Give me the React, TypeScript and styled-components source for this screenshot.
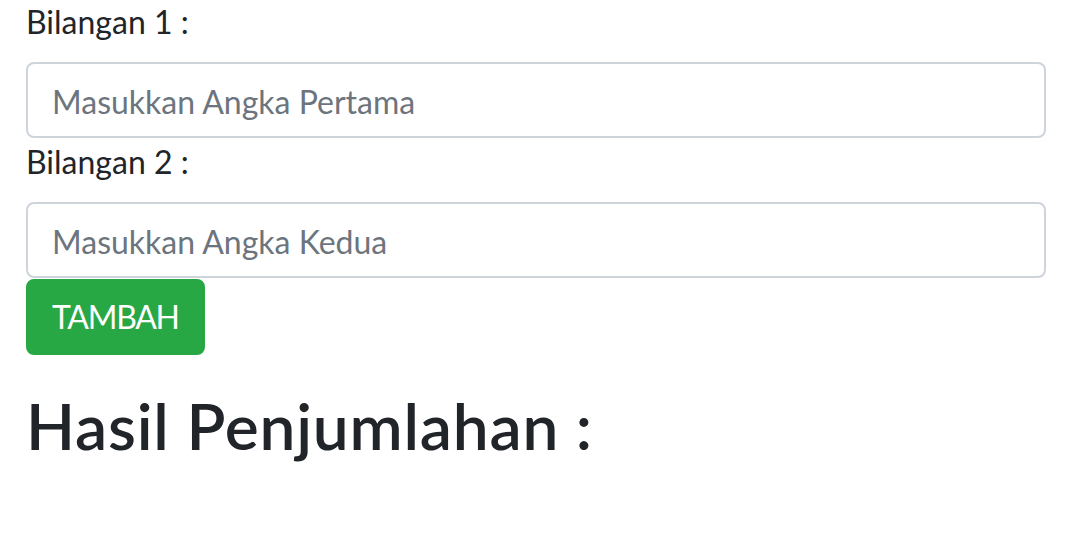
import React from "react";
import styled, { createGlobalStyle } from "styled-components";

const GlobalStyle = createGlobalStyle`
  * { box-sizing: border-box; }
  body {
    margin: 0;
    background: #ffffff;
    color: #212529;
    font-family: Lato, "Liberation Sans", sans-serif;
    font-size: 32px;
    line-height: 48px;
  }
`;

const Page = styled.main`
  display: flex;
  flex-direction: column;
  align-items: flex-start;
  padding: 0 40px 0 26px;
  margin-top: -2px;
`;

const FieldLabel = styled.label`
  display: block;
  font-size: 32px;
  line-height: 48px;
  margin-bottom: 16px;
  color: #212529;
`;

const NumberInput = styled.input`
  display: block;
  width: 100%;
  height: 76px;
  padding: 2px 24px 0;
  border: 2px solid #ced4da;
  border-radius: 8px;
  font-family: Lato, "Liberation Sans", sans-serif;
  font-size: 32px;
  color: #495057;
  background: #ffffff;
  outline: none;
  &::placeholder {
    color: #6c757d;
    opacity: 1;
  }
`;

const AddButton = styled.button`
  margin-top: 1px;
  height: 76px;
  padding: 0 24px;
  border: 2px solid #28a745;
  border-radius: 8px;
  background: #28a745;
  color: #ffffff;
  font-family: Lato, "Liberation Sans", sans-serif;
  font-size: 32px;
  line-height: 48px;
  letter-spacing: -1.3px;
  cursor: pointer;
`;

const ResultHeading = styled.h2`
  margin: 33px 0 16px;
  font-family: Lato, "Liberation Sans", sans-serif;
  font-size: 64px;
  font-weight: 600;
  line-height: 1.2;
  letter-spacing: 0.8px;
  color: #212529;
`;

export default function App() {
  return (
    <>
      <GlobalStyle />
      <Page>
        <FieldLabel htmlFor="angka1">Bilangan 1 :</FieldLabel>
        <NumberInput id="angka1" type="text" placeholder="Masukkan Angka Pertama" />
        <FieldLabel htmlFor="angka2">Bilangan 2 :</FieldLabel>
        <NumberInput id="angka2" type="text" placeholder="Masukkan Angka Kedua" />
        <AddButton type="button">TAMBAH</AddButton>
        <ResultHeading>Hasil Penjumlahan :</ResultHeading>
      </Page>
    </>
  );
}
